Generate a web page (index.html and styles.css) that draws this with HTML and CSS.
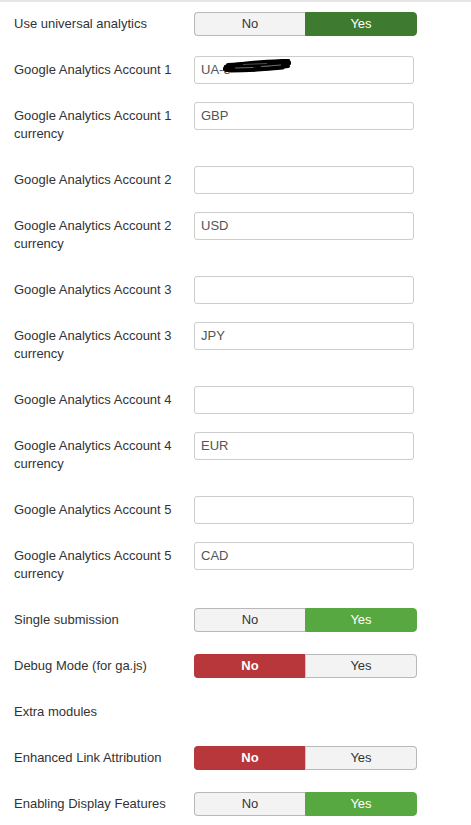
FILE: index.html
```html
<!DOCTYPE html>
<html>
<head>
<meta charset="utf-8">
<link rel="stylesheet" href="styles.css">
</head>
<body>
<div class="form">
  <div class="row">
    <div class="label">Use universal analytics</div>
    <div class="toggle"><span class="opt">No</span><span class="opt yes-dark">Yes</span></div>
  </div>
  <div class="row">
    <div class="label">Google Analytics Account 1</div>
    <div class="input redacted"><span>UA-5</span>
      <svg class="scribble" width="68" height="14" viewBox="0 0 68 14">
        <path d="M3 8 C18 4 40 3 65 2" stroke="#000" stroke-width="4.5" fill="none" stroke-linecap="round"/>
        <path d="M2 10 C20 7 45 5 66 4" stroke="#000" stroke-width="4.5" fill="none" stroke-linecap="round"/>
        <path d="M3 11 C22 11 44 10 65 7" stroke="#000" stroke-width="4" fill="none" stroke-linecap="round"/>
        <path d="M5 6 C25 5 45 4 63 3" stroke="#000" stroke-width="4" fill="none" stroke-linecap="round"/>
        <path d="M8 12 C20 12 40 11 60 9" stroke="#000" stroke-width="3" fill="none" stroke-linecap="round"/>
        <path d="M12 9 L30 8.5" stroke="#fff" stroke-width="0.7" fill="none" opacity="0.6"/>
        <path d="M38 7.5 L58 6" stroke="#fff" stroke-width="0.7" fill="none" opacity="0.6"/>
        <path d="M20 5.5 L44 4.5" stroke="#fff" stroke-width="0.6" fill="none" opacity="0.5"/>
      </svg>
    </div>
  </div>
  <div class="row">
    <div class="label">Google Analytics Account 1 currency</div>
    <div class="input">GBP</div>
  </div>
  <div class="row">
    <div class="label">Google Analytics Account 2</div>
    <div class="input"></div>
  </div>
  <div class="row">
    <div class="label">Google Analytics Account 2 currency</div>
    <div class="input">USD</div>
  </div>
  <div class="row">
    <div class="label">Google Analytics Account 3</div>
    <div class="input"></div>
  </div>
  <div class="row">
    <div class="label">Google Analytics Account 3 currency</div>
    <div class="input">JPY</div>
  </div>
  <div class="row">
    <div class="label">Google Analytics Account 4</div>
    <div class="input"></div>
  </div>
  <div class="row">
    <div class="label">Google Analytics Account 4 currency</div>
    <div class="input">EUR</div>
  </div>
  <div class="row">
    <div class="label">Google Analytics Account 5</div>
    <div class="input"></div>
  </div>
  <div class="row">
    <div class="label">Google Analytics Account 5 currency</div>
    <div class="input">CAD</div>
  </div>
  <div class="row">
    <div class="label">Single submission</div>
    <div class="toggle"><span class="opt">No</span><span class="opt yes">Yes</span></div>
  </div>
  <div class="row">
    <div class="label">Debug Mode (for ga.js)</div>
    <div class="toggle"><span class="opt no">No</span><span class="opt">Yes</span></div>
  </div>
  <div class="row">
    <div class="label">Extra modules</div>
  </div>
  <div class="row">
    <div class="label">Enhanced Link Attribution</div>
    <div class="toggle"><span class="opt no">No</span><span class="opt">Yes</span></div>
  </div>
  <div class="row">
    <div class="label">Enabling Display Features</div>
    <div class="toggle"><span class="opt">No</span><span class="opt yes">Yes</span></div>
  </div>
</div>
</body>
</html>
```
FILE: styles.css
```css
html, body {
  margin: 0;
  padding: 0;
  background: #fff;
}
body {
  font-family: "Liberation Sans", Arial, sans-serif;
  font-size: 13px;
  color: #333;
}
.form {
  border-top: 2px solid #e6e6e6;
  padding: 8px 0 0 14px;
}
.row {
  display: flex;
  align-items: flex-start;
  margin-bottom: 18px;
}
.label {
  width: 160px;
  min-height: 18px;
  padding: 5px 0;
  line-height: 18px;
  margin-right: 20px;
}
.input {
  position: relative;
  box-sizing: border-box;
  width: 220px;
  height: 28px;
  border: 1px solid #ccc;
  border-radius: 3px;
  padding: 4px 6px;
  line-height: 18px;
  color: #555;
  background: #fff;
}
.scribble {
  position: absolute;
  left: 28px;
  top: 2px;
}
.toggle {
  display: flex;
  width: 223px;
  height: 24px;
  margin: 2px 0;
}
.opt {
  box-sizing: border-box;
  flex: 1 1 0;
  display: flex;
  align-items: center;
  justify-content: center;
  height: 24px;
  background: #f3f3f3;
  border: 1px solid #b8b8b8;
  color: #333;
  line-height: 18px;
}
.opt:first-child {
  border-radius: 4px 0 0 4px;
  border-right: none;
}
.opt:last-child {
  border-radius: 0 4px 4px 0;
  border-left: 1px solid #c8c8c8;
}
.opt.yes {
  background: #58a842;
  border-color: #58a842;
  color: #fff;
}
.opt.yes-dark {
  background: #3e7a2f;
  border-color: #3e7a2f;
  color: #fff;
}
.opt.no {
  background: #b7373a;
  border-color: #b7373a;
  color: #fff;
  font-weight: bold;
}
```
